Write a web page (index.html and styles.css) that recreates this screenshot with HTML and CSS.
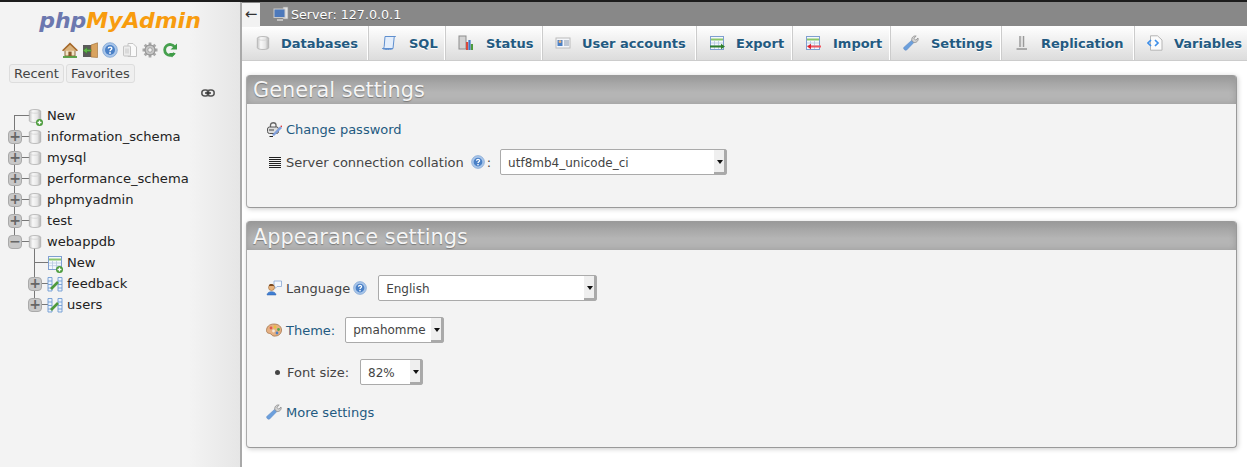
FILE: index.html
```html
<!DOCTYPE html>
<html lang="en">
<head>
<meta charset="utf-8">
<title>phpMyAdmin</title>
<link rel="stylesheet" href="styles.css">
</head>
<body>
<svg class="defs" width="0" height="0" aria-hidden="true">
  <defs>
    <linearGradient id="cyl" x1="0" x2="1" y1="0" y2="0"><stop offset="0" stop-color="#c4c4c4"/><stop offset=".3" stop-color="#f8f8f8"/><stop offset=".7" stop-color="#e6e6e6"/><stop offset="1" stop-color="#b0b0b0"/></linearGradient>
    <symbol id="db" viewBox="0 0 16 16"><path d="M2.3 3.3C2.3 .9 13.7 .9 13.7 3.3V12.7C13.7 15.1 2.3 15.1 2.3 12.7Z" fill="url(#cyl)" stroke="#b0b0b0" stroke-width=".8"/><path d="M2.5 4C4 5.6 12 5.6 13.5 4" fill="none" stroke="#cfcfcf" stroke-width=".7"/></symbol>
    <symbol id="plus" viewBox="0 0 6 6"><circle cx="3" cy="3" r="3" fill="#4a9b3a"/><path d="M3 1.3V4.7M1.3 3H4.7" stroke="#fff" stroke-width="1.1"/></symbol>
    <symbol id="tbl" viewBox="0 0 16 16"><rect x="1.5" y="1.5" width="13" height="13" fill="#f4f8fd" stroke="#7f9fd0"/><path d="M2 4.5H14" stroke="#8cc66a" stroke-width="2"/><path d="M2 8H14M2 10.7H14M5.5 6V14M9.5 6V14" stroke="#b5c6e0" stroke-width=".8"/></symbol>
    <symbol id="help" viewBox="0 0 16 16"><circle cx="8" cy="8" r="7.3" fill="#a9c6ea" stroke="#7ea3d2" stroke-width=".8"/><circle cx="8" cy="8" r="5" fill="#4a80c6"/><path d="M6.3 6.6C6.3 4.6 9.8 4.6 9.8 6.5C9.8 7.8 8 7.8 8 9.2" fill="none" stroke="#fff" stroke-width="1.4"/><rect x="7.2" y="10.2" width="1.6" height="1.6" fill="#fff"/></symbol>
    <symbol id="wrench" viewBox="0 0 16 16"><path d="M.8 12.5L8.8 5.2L10.9 7.5L3.6 15C2.2 15.9 .1 14 .8 12.5Z" fill="#6b9fdc" stroke="#5a88c6" stroke-width=".6"/><path d="M8.8 5.6C8.2 3 10.3 .3 13.2 1.1L10.9 3.3L12.7 5.2L15 3C15.8 5.8 13.3 8 10.9 7.5Z" fill="#d2d2d2" stroke="#8c8c8c" stroke-width=".8"/></symbol>
    <symbol id="chart" viewBox="0 0 16 16"><path d="M1 1.5H5V15H1ZM1 5H5M1 8.5H5M1 12H5M11 1.5H15V15H11ZM11 5H15M11 8.5H15M11 12H15" fill="#eaf2fb" stroke="#6f9bd3" stroke-width=".9"/><path d="M4 13L11 6" stroke="#4f9a3c" stroke-width="2.6"/></symbol>
  </defs>
</svg>
<div class="topline"></div>
<div class="app">
  <aside class="sidebar">
    <div class="logo"><span class="logo-php">php</span><span class="logo-my">MyAdmin</span></div>
    <div class="quick">
      <svg class="qi" viewBox="0 0 16 16"><path d="M3 8V14H13V8" fill="#f2e3c4" stroke="#8a6b3d"/><path d="M.6 8.8L8 1.6L15.4 8.8" fill="#d9b27c" stroke="#a5682a" stroke-width="1.6"/><rect x="6.4" y="9.6" width="3.2" height="4.4" fill="#8a5a2b"/><path d="M1 15H15" stroke="#4f9a3c" stroke-width="1.8"/></svg>
      <svg class="qi" viewBox="0 0 16 16"><rect x="1" y="3" width="8" height="12" fill="#5a5a5a"/><path d="M9 3L15.5 .8V15.5L9 15Z" fill="#d9a35f" stroke="#9a6b32" stroke-width=".6"/><path d="M1 8.5L5 5.5V7.5H9V9.5H5V11.5Z" fill="#5fb548" stroke="#38802a" stroke-width=".5"/></svg>
      <svg class="qi" viewBox="0 0 16 16"><use href="#help"/></svg>
      <svg class="qi" viewBox="0 0 16 16"><path d="M6 1.5H11L14.5 5V14.5H6Z" fill="#fafafa" stroke="#c4c4c4"/><rect x="1.5" y="4" width="7" height="10" rx="1" fill="#ececec" stroke="#c4c4c4"/><path d="M4 6.5V11.5M6 6.5V11.5" stroke="#c8c8c8"/></svg>
      <svg class="qi" viewBox="0 0 16 16"><path d="M8 .5V15.5M.5 8H15.5M2.7 2.7L13.3 13.3M13.3 2.7L2.7 13.3" stroke="#a8a8a8" stroke-width="2.8"/><circle cx="8" cy="8" r="5" fill="#c6c6c6" stroke="#8d8d8d"/><circle cx="8" cy="8" r="2.2" fill="#f2f2f2" stroke="#8d8d8d" stroke-width=".7"/></svg>
      <svg class="qi" viewBox="0 0 16 16"><path d="M12.5 11A5.4 5.4 0 1 1 12.6 5" fill="none" stroke="#46a04e" stroke-width="2.8"/><path d="M8.5 7.5H15V1.5Z" fill="#3f9c48"/><path d="M7 11H13.5L10 15.5Z" fill="#3f9c48"/></svg>
    </div>
    <div class="tabs-rf">
      <span class="rf-btn">Recent</span>
      <span class="rf-btn">Favorites</span>
    </div>
    <div class="link-row">
      <svg class="chain" viewBox="0 0 14 8"><rect x=".8" y="1" width="7" height="6" rx="3" fill="none" stroke="#555" stroke-width="1.5"/><rect x="6.2" y="1" width="7" height="6" rx="3" fill="none" stroke="#555" stroke-width="1.5"/><path d="M4 4H10" stroke="#333" stroke-width="1.4"/></svg>
    </div>
    <ul class="tree">
      <li class="node node-first"><span class="exp-none"></span><span class="ico"><svg viewBox="0 0 16 16"><use href="#db"/></svg><svg class="badge" viewBox="0 0 6 6"><use href="#plus"/></svg></span><span class="name">New</span></li>
      <li class="node"><span class="exp">+</span><span class="ico"><svg viewBox="0 0 16 16"><use href="#db"/></svg></span><span class="name">information_schema</span></li>
      <li class="node"><span class="exp">+</span><span class="ico"><svg viewBox="0 0 16 16"><use href="#db"/></svg></span><span class="name">mysql</span></li>
      <li class="node"><span class="exp">+</span><span class="ico"><svg viewBox="0 0 16 16"><use href="#db"/></svg></span><span class="name">performance_schema</span></li>
      <li class="node"><span class="exp">+</span><span class="ico"><svg viewBox="0 0 16 16"><use href="#db"/></svg></span><span class="name">phpmyadmin</span></li>
      <li class="node"><span class="exp">+</span><span class="ico"><svg viewBox="0 0 16 16"><use href="#db"/></svg></span><span class="name">test</span></li>
      <li class="node node-last"><span class="exp">−</span><span class="ico"><svg viewBox="0 0 16 16"><use href="#db"/></svg></span><span class="name">webappdb</span></li>
      <li class="node sub sub-first"><span class="exp-none"></span><span class="ico"><svg viewBox="0 0 16 16"><use href="#tbl"/></svg><svg class="badge" viewBox="0 0 6 6"><use href="#plus"/></svg></span><span class="name">New</span></li>
      <li class="node sub"><span class="exp">+</span><span class="ico"><svg viewBox="0 0 16 16"><use href="#chart"/></svg></span><span class="name">feedback</span></li>
      <li class="node sub sub-last"><span class="exp">+</span><span class="ico"><svg viewBox="0 0 16 16"><use href="#chart"/></svg></span><span class="name">users</span></li>
    </ul>
  </aside>
  <main class="main">
    <div class="serverbar">
      <span class="back">←</span>
      <svg class="srv-ico" viewBox="0 0 16 16"><rect x="10" y="1" width="5" height="12" fill="#e4e4e4" stroke="#999" stroke-width=".7"/><rect x="1" y="3" width="11" height="8.5" fill="#4d79bb" stroke="#c9c9c9"/><path d="M4 14H10" stroke="#cfcfcf" stroke-width="1.6"/></svg>
      <span class="srv-text">Server: 127.0.0.1</span>
    </div>
    <nav class="menu">
      <a class="tab t-db"><svg viewBox="0 0 16 16"><use href="#db"/></svg><span>Databases</span></a>
      <a class="tab t-sql"><svg viewBox="0 0 16 16"><path d="M4 1.5H14.5C13.3 1.5 13 2.5 13 4L12 13.5H1.5C2.6 13.5 3 12.8 3.2 11.5Z" fill="#e4eefb" stroke="#5f8fcf"/><path d="M1.5 13.5C2.5 14.8 11 14.8 12 13.5" fill="none" stroke="#5f8fcf"/></svg><span>SQL</span></a>
      <a class="tab t-status"><svg viewBox="0 0 16 16"><rect x="1" y="1" width="7" height="13" fill="#d3d3d3" stroke="#8d8d8d"/><rect x="8" y="7" width="2.2" height="8" fill="#d9483b"/><rect x="10.4" y="5" width="2.2" height="10" fill="#3f78c8"/><rect x="12.8" y="9" width="2.2" height="6" fill="#4f9a3c"/></svg><span>Status</span></a>
      <a class="tab t-users"><svg viewBox="0 0 16 16"><rect x="1" y="3" width="14" height="10" fill="#f4f6fa" stroke="#bcbcbc"/><rect x="2.5" y="5" width="5" height="6" fill="#4a7fc4"/><circle cx="5" cy="6.7" r="1.4" fill="#e8b27a"/><path d="M9 6H14M9 8H14M9 10H14" stroke="#8797ad"/></svg><span>User accounts</span></a>
      <a class="tab t-export"><svg viewBox="0 0 16 16"><use href="#tbl"/><path d="M1 11.5H13" stroke="#2f7f2a" stroke-width="2"/><path d="M12 8.7L16 11.5L12 14.3Z" fill="#2f7f2a"/></svg><span>Export</span></a>
      <a class="tab t-import"><svg viewBox="0 0 16 16"><use href="#tbl"/><path d="M5 11.5H16" stroke="#f0555f" stroke-width="2"/><path d="M6 8.7L2 11.5L6 14.3Z" fill="#e2202c"/></svg><span>Import</span></a>
      <a class="tab t-settings"><svg viewBox="0 0 16 16"><use href="#wrench"/></svg><span>Settings</span></a>
      <a class="tab t-repl"><svg viewBox="0 0 16 16"><path d="M6 1V12M9.5 1V12" stroke="#9a9a9a" stroke-width="1.5"/><path d="M7.7 1V12" stroke="#ddd"/><path d="M2.5 14H13" stroke="#9a9a9a" stroke-width="1.6"/></svg><span>Replication</span></a>
      <a class="tab t-vars"><svg viewBox="0 0 16 16"><path d="M3.5 .8H10.5L15 5V15.2H3.5Z" fill="#fbfbfb" stroke="#b5b5b5"/><path d="M4 5L1 8L4 11M8 5L11 8L8 11" fill="none" stroke="#3f8fe8" stroke-width="1.7"/></svg><span>Variables</span></a>
    </nav>
    <section class="panel panel-general">
      <h2 class="panel-head">General settings</h2>
      <div class="panel-body">
        <div class="row row-pass">
          <svg class="ri" viewBox="0 0 16 16"><path d="M4.5 6V4C4.5 1 10 1 10 4V6" fill="none" stroke="#666" stroke-width="1.3"/><rect x="1.5" y="6" width="11" height="6.5" rx="2" fill="#dcdcdc" stroke="#555"/><path d="M3 9H8" stroke="#444"/><path d="M6 14L14 5.5L16 7L8 15Z" fill="#7f9fdc"/><path d="M3.5 15.5H7" stroke="#222"/><path d="M14 5L16 6.6L16 4.5Z" fill="#d33"/></svg>
          <a class="link">Change password</a>
        </div>
        <div class="row row-coll">
          <svg class="ri" viewBox="0 0 16 16"><path d="M3 3.5H15M3 5.5H15M3 7.5H15M3 9.5H15M3 11.5H15M3 13.5H15" stroke="#222" stroke-width="1"/></svg>
          <span class="lbl">Server connection collation</span>
          <svg class="hi" viewBox="0 0 16 16"><use href="#help"/></svg><span class="colon">:</span>
          <span class="sel sel-coll"><span class="sel-v">utf8mb4_unicode_ci</span><span class="arrow"></span></span>
        </div>
      </div>
    </section>
    <section class="panel panel-appearance">
      <h2 class="panel-head">Appearance settings</h2>
      <div class="panel-body body-app">
        <div class="row row-lang">
          <svg class="ri" viewBox="0 0 16 16"><path d="M8 1H15.5V6.5H11L9 8.5V6.5H8Z" fill="#f4f8fd" stroke="#8aa8d4" stroke-width=".8"/><circle cx="5.5" cy="7.5" r="3" fill="#e8b27a" stroke="#8a5a2b" stroke-width=".5"/><path d="M3 5.5C3.5 3.5 7.5 3.5 8 6L3 6Z" fill="#7a4a20"/><path d="M1 15C1 10.5 10 10.5 10 15Z" fill="#3f7fd4" stroke="#2a5fa8" stroke-width=".5"/></svg>
          <span class="lbl">Language</span>
          <svg class="hi hi-lang" viewBox="0 0 16 16"><use href="#help"/></svg>
          <span class="sel sel-lang"><span class="sel-v">English</span><span class="arrow"></span></span>
        </div>
        <div class="row row-theme">
          <svg class="ri" viewBox="0 0 16 16"><path d="M8 2C3 2 .5 5 .5 8.5C.5 12 4 11 5 12C6 13.5 7 14.5 10 14C14 13.5 15.5 10.5 15.5 8C15.5 4.5 12.5 2 8 2Z" fill="#e6b184" stroke="#9b6a3e" stroke-width=".7"/><circle cx="5" cy="6" r="1.4" fill="#e2574c"/><circle cx="9" cy="5" r="1.4" fill="#e9c13a"/><circle cx="12.5" cy="7.5" r="1.4" fill="#5aa84a"/><circle cx="11" cy="11" r="1.4" fill="#4a7fc4"/><circle cx="7.5" cy="9" r="1.4" fill="#f5ead9"/></svg>
          <a class="link">Theme:</a>
          <span class="sel sel-theme"><span class="sel-v">pmahomme</span><span class="arrow"></span></span>
        </div>
        <div class="row row-font">
          <span class="dot"></span>
          <span class="lbl">Font size:</span>
          <span class="sel sel-font"><span class="sel-v">82%</span><span class="arrow"></span></span>
        </div>
        <div class="row row-more">
          <svg class="ri" viewBox="0 0 16 16"><use href="#wrench"/></svg>
          <a class="link">More settings</a>
        </div>
      </div>
    </section>
  </main>
</div>
</body>
</html>
```
FILE: styles.css
```css
* { box-sizing: border-box; }
html, body { margin: 0; padding: 0; }
body {
  width: 1247px;
  height: 467px;
  overflow: hidden;
  background: #fff;
  font-family: "DejaVu Sans", sans-serif;
  font-size: 13px;
  color: #444;
}
.defs { position: absolute; }
.topline { height: 2px; background: #1c1c1c; }
.app { display: flex; height: 465px; }

/* sidebar */
.sidebar {
  flex: 0 0 242px;
  height: 465px;
  background: linear-gradient(to right, #f3f3f3 0, #f3f3f3 190px, #e6e6e6 240px);
  border-right: 2px solid #a9a9a9;
}
.logo {
  text-align: center;
  height: 38px;
  padding-top: 4px;
  font-family: "DejaVu Sans", sans-serif;
  font-style: italic;
  font-weight: bold;
  font-size: 22px;
  line-height: 30px;
}
.logo-php { color: #6c78af; }
.logo-my { color: #f89c0e; }
.quick { display: flex; justify-content: center; gap: 4px; height: 20px; padding-top: 2px; }
.qi { width: 16px; height: 16px; flex: none; }
.tabs-rf { display: flex; gap: 2px; padding: 4px 0 0 9px; }
.rf-btn {
  height: 19px;
  padding: 0 4px;
  border: 1px solid #ddd;
  border-radius: 3px;
  background: #efefef;
  line-height: 17px;
  font-size: 13px;
  color: #444;
}
.link-row { display: flex; justify-content: flex-end; height: 22px; padding: 5px 25px 0 0; }
.chain { width: 14px; height: 8px; margin-top: 1px; }

/* tree */
.tree { list-style: none; margin: 0; padding: 0 0 0 8px; color: #222; }
.node { position: relative; display: flex; align-items: center; height: 21px; }
.exp, .exp-none { flex: none; width: 14px; height: 14px; }
.exp {
  position: relative;
  z-index: 1;
  background: #c8c8c8;
  border: 1px solid #aaa;
  border-radius: 4px;
  font: bold 14px/11px "DejaVu Sans", sans-serif;
  text-align: center;
  color: #666;
}
.ico { position: relative; z-index: 1; flex: none; width: 16px; height: 16px; margin-left: 5px; }
.ico > svg { display: block; width: 16px; height: 16px; }
.ico > .badge { position: absolute; right: 0; bottom: -2px; width: 7px; height: 7px; }
.name { margin-left: 4px; font-size: 13.12px; line-height: 16px; white-space: nowrap; }

/* connector lines sit beneath the expander boxes and icons */
.node::before {
  content: "";
  position: absolute;
  left: 6px;
  top: 0;
  bottom: 0;
  border-left: 1px solid #777;
}
.node::after {
  content: "";
  position: absolute;
  left: 6px;
  top: 10px;
  width: 16px;
  border-top: 1px solid #777;
}
.node-first::before { top: 10px; }
.node-last::before { bottom: 10px; }
.sub { padding-left: 20px; }
.sub::before { left: 26px; }
.sub::after { left: 26px; }
.sub-first::before { top: -4px; }
.sub-last::before { bottom: 10px; }

/* main */
.main { flex: 1; min-width: 0; }
.serverbar {
  display: flex;
  align-items: center;
  height: 24px;
  background: #888;
  color: #fff;
}
.back {
  flex: none;
  width: 18px;
  height: 24px;
  margin-top: 1px;
  background: #f2f2f2;
  color: #333;
  font-size: 15px;
  line-height: 22px;
  text-align: center;
}
.srv-ico { width: 16px; height: 16px; margin-left: 13px; flex: none; }
.srv-text { margin-left: 2px; font-size: 12.7px; text-shadow: 0 1px 0 #555; color: #fff; }
.menu {
  display: flex;
  height: 35px;
  white-space: nowrap;
  overflow: hidden;
  background: linear-gradient(#fff, #dcdcdc);
  border-bottom: 1px solid #ccc;
}
.tab {
  display: flex;
  flex: none;
  align-items: center;
  height: 34px;
  border-right: 1px solid #fff;
  box-shadow: 1px 0 0 #ccc inset;
  font-weight: bold;
  font-size: 13px;
  color: #235a81;
  text-shadow: 0 1px 0 #fff;
}
.tab svg { width: 16px; height: 16px; flex: none; margin: 0 11px 0 13px; }
.tab span { white-space: nowrap; }
.t-db { box-shadow: none; width: 126px; }
.t-db svg { margin-right: 10px; }
.t-sql { width: 77px; }
.t-status { width: 97px; }
.t-users { width: 154px; }
.t-export { width: 96px; }
.t-import { width: 98px; }
.t-settings { width: 111px; }
.t-repl { width: 133px; }
.t-vars { width: 120px; }
.t-sql svg, .t-status svg, .t-import svg, .t-settings svg { margin-right: 12px; }
.panel {
  margin: 0 10px 0 4px;
  width: 991px;
  border: 1px solid #999;
  border-top: 0;
  border-left-color: #aaa;
  border-radius: 4px;
  background: #f3f3f3;
  box-shadow: 1px 1px 5px #ccc;
}
.panel-general { margin-top: 14px; height: 133px; }
.panel-appearance { margin-top: 13px; height: 227px; }
.panel-head {
  margin: 0;
  height: 29px;
  padding-left: 6px;
  border-radius: 4px 4px 0 0;
  background: linear-gradient(#999, #b5b5b5 60%);
  box-shadow: inset 0 0 6px #999;
  font-weight: normal;
  font-size: 20.85px;
  line-height: 30px;
  color: #f5f5f5;
  text-shadow: 0 1px 1px #777;
}
.panel-appearance .panel-head { padding-top: 1px; }
.panel-body { padding: 16px 0 0 19px; }
.body-app { padding-top: 25px; }
.row { display: flex; align-items: center; }
.ri { width: 16px; height: 16px; flex: none; margin-right: 4px; }
.link { color: #235a81; }
.lbl { color: #444; }
.hi { width: 14px; height: 14px; flex: none; margin-left: 7px; }
.hi-lang { margin-left: 3px; }
.colon { margin-left: 2px; }
.row-pass { height: 18px; }
.row-coll { height: 26px; margin-top: 11px; }
.row-lang { height: 26px; }
.row-theme { height: 26px; margin-top: 16px; }
.row-font { height: 26px; margin-top: 16px; padding-left: 9px; }
.row-more { height: 18px; margin-top: 18px; }
.dot { width: 5px; height: 5px; border-radius: 50%; background: #444; margin-right: 7px; flex: none; }
.sel {
  display: flex;
  align-items: center;
  justify-content: space-between;
  height: 26px;
  background: #fff;
  border: 1px solid #aaa;
  border-radius: 2px;
  font-size: 12px;
  color: #444;
  flex: none;
}
.sel-v { padding-left: 7px; }
.sel-coll .sel-v, .sel-lang .sel-v, .sel-font .sel-v { padding-top: 2px; }
.arrow {
  position: relative;
  width: 12px;
  height: 24px;
  background: #efefef;
  box-shadow: inset -2px -2px 0 #a9a9a9;
}
.arrow::after {
  content: "";
  position: absolute;
  left: 3px;
  top: 10px;
  border: 3px solid transparent;
  border-top: 4px solid #111;
  border-bottom: 0;
}
.sel-coll { width: 227px; margin-left: 9px; }
.sel-lang { width: 219px; margin-left: 11px; }
.sel-theme { width: 99px; margin-left: 10px; }
.sel-font { width: 63px; margin-left: 11px; }
```
